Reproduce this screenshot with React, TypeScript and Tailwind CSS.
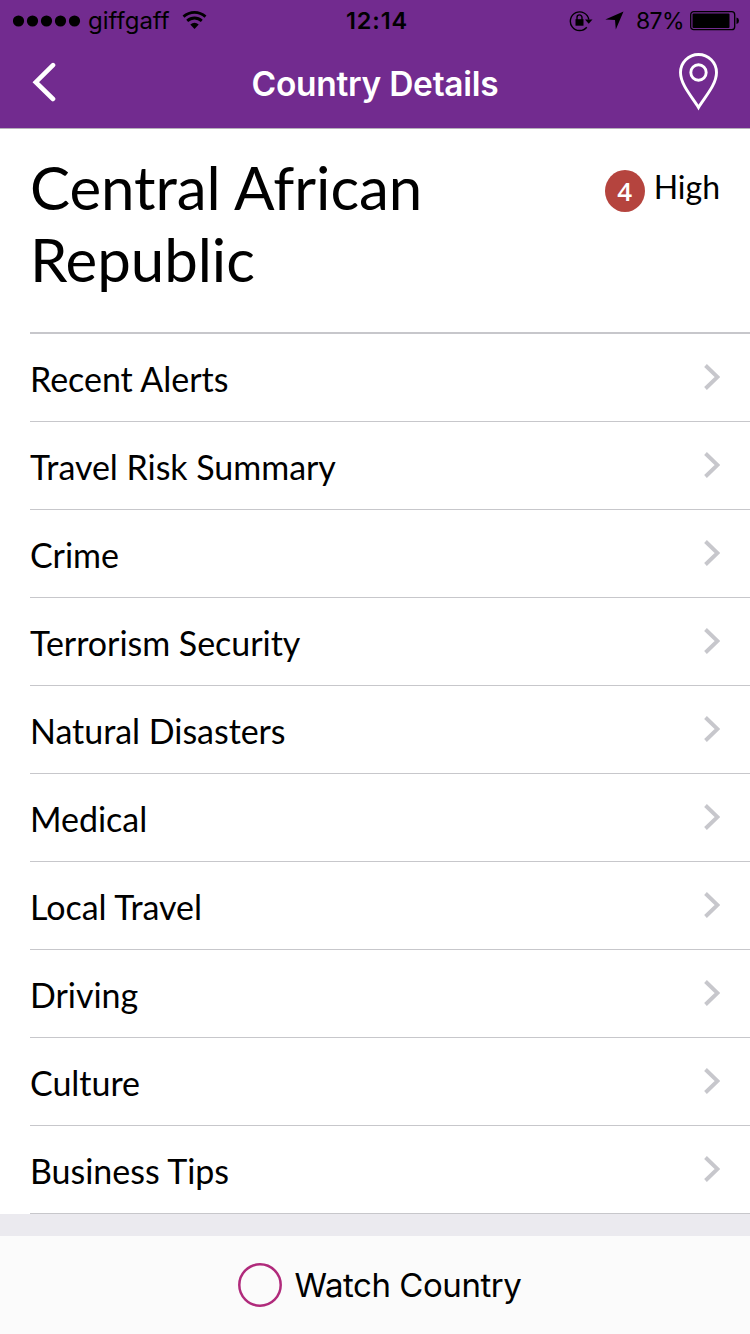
const sections = [
  'Recent Alerts',
  'Travel Risk Summary',
  'Crime',
  'Terrorism Security',
  'Natural Disasters',
  'Medical',
  'Local Travel',
  'Driving',
  'Culture',
  'Business Tips',
];

function StatusBar() {
  return (
    <div className="grid h-10 grid-cols-3 items-center text-black">
      <div className="flex items-center pl-[13px]">
        <svg width="68" height="12" viewBox="0 0 68 12" fill="currentColor">
          {[5.5, 19.5, 33.5, 47.5, 61.5].map((cx) => (
            <circle key={cx} cx={cx} cy="6" r="5.6" />
          ))}
        </svg>
        <span className="ml-[7px] w-[82px] pt-[1px] text-[24px] leading-10 whitespace-nowrap">giffgaff</span>
        <svg className="-mt-[1px] ml-3" width="26" height="20" viewBox="0 0 26 20" fill="none" stroke="currentColor">
          <path d="M1.5 6.6C8 .9 17 .9 23.500 6.600" strokeWidth="2.800" />
          <path d="M5.200 10.900C9.500 7 15.500 7 19.800 10.900" strokeWidth="2.800" />
          <path d="M8.300 14.500Q12.500 11 16.700 14.500L12.500 19Z" fill="currentColor" stroke="none" />
        </svg>
      </div>
      <div className="text-center text-[23.500px] leading-10 font-semibold tracking-[0.900px]">
        <span className="relative left-[2px]">12:14</span>
      </div>
      <div className="flex items-center justify-end pr-[10px]">
        <svg width="24" height="22" viewBox="0 0 24 22" fill="none" stroke="currentColor">
          <path d="M17.800 17.200A9.300 9.300 0 1 1 19.800 9.500" strokeWidth="1.400" />
          <path d="M16 9.500H23.500L19.700 13.700Z" fill="currentColor" stroke="none" />
          <rect x="6.500" y="9.200" width="8" height="6.500" fill="currentColor" stroke="none" />
          <path d="M8 10V7.400A2.500 2.500 0 0 1 13 7.400V10" strokeWidth="1.400" />
        </svg>
        <svg className="ml-3" width="19" height="19" viewBox="0 0 19 19" fill="currentColor">
          <path d="M18.500 .5L10.800 18.500L10 9L.3 8.500Z" />
        </svg>
        <span className="ml-3 text-[23px] leading-10 tracking-[-0.600px]">87%</span>
        <svg className="ml-[6px]" width="50" height="20" viewBox="0 0 50 20" fill="currentColor">
          <rect x=".7" y=".7" width="44" height="18" rx="3" fill="none" stroke="currentColor" strokeWidth="1.300" />
          <rect x="2.500" y="2.500" width="37" height="14.500" rx="1" />
          <path d="M46.500 6.500Q49 7 49 9.800Q49 12.600 46.500 13Z" />
        </svg>
      </div>
    </div>
  );
}

function NavBar() {
  return (
    <div className="flex h-[88px] items-start justify-between px-8 pt-[13px] text-white">
      <svg className="mt-[9px]" width="40" height="40" viewBox="0 0 40 40" fill="none" stroke="currentColor" strokeWidth="4.600" strokeLinecap="round">
        <path d="M21 3.200L3.800 20.200L21 37" />
      </svg>
      <h1 className="mt-[9px] text-[33.500px] leading-[44px] font-semibold tracking-[-0.280px]">Country Details</h1>
      <svg className="relative left-[1px]" width="40" height="58" viewBox="0 0 40 58" fill="none" stroke="currentColor" strokeWidth="2.900">
        <path d="M19.500 54.500C14 45 1.500 32 1.500 19.500A18 18 0 0 1 37.500 19.500C37.500 32 25 45 19.500 54.500Z" />
        <circle cx="19.500" cy="19.500" r="7.700" />
      </svg>
    </div>
  );
}

function SectionRow({ label }: { label: string }) {
  return (
    <li className="flex h-[88px] items-center justify-between border-b border-[#c7c7cb] pr-[30px]">
      <span className="pt-[2px] text-[34px] leading-[42px] tracking-[-0.030px]">{label}</span>
      <svg className="-mt-[2px]" width="16" height="26" viewBox="0 0 16 26" fill="none" stroke="#c7c7cc" strokeWidth="3.900">
        <path d="M1.500 1.500L13.500 13L1.500 24.500" />
      </svg>
    </li>
  );
}

export default function App() {
  return (
    <div className="flex h-[1334px] w-[750px] flex-col bg-white font-['Lato',sans-serif] text-black">
      <header className="h-[129px] border-b border-[#b6b0ba] bg-[#722b8f] font-['Inter',sans-serif]">
        <StatusBar />
        <NavBar />
      </header>

      {/* Country and risk level */}
      <div className="pl-[30px]">
        <div className="flex h-[205px] items-start justify-between border-b-2 border-[#c7c7cb] pt-[22px] pr-[30px]">
          <h2 className="w-[440px] text-[60px] leading-[72px] tracking-[-0.050px]">Central African Republic</h2>
          <div className="flex items-start pt-[16px]">
            <span className="mt-[3px] flex h-[42px] w-10 items-center justify-center rounded-[50%] bg-[#b5443e] font-['Open_Sans',sans-serif] text-[26px] font-semibold text-white">
              4
            </span>
            <span className="ml-[9px] text-[32px] leading-[40px]">High</span>
          </div>
        </div>
      </div>

      <ul className="pl-[30px]">
        {sections.map((label) => (
          <SectionRow key={label} label={label} />
        ))}
      </ul>

      <div className="h-[22px] bg-[#ebeaef]" />
      <footer className="flex flex-1 items-center justify-center bg-[#fbfbfb] pl-[9px] font-['Inter',sans-serif]">
        <svg width="44" height="44" viewBox="0 0 44 44" fill="none" stroke="#b02a7b" strokeWidth="2.500">
          <circle cx="22" cy="22" r="20.700" />
        </svg>
        <span className="ml-[13px] pt-[2px] text-[33px] tracking-[-0.450px]">Watch Country</span>
      </footer>
    </div>
  );
}
